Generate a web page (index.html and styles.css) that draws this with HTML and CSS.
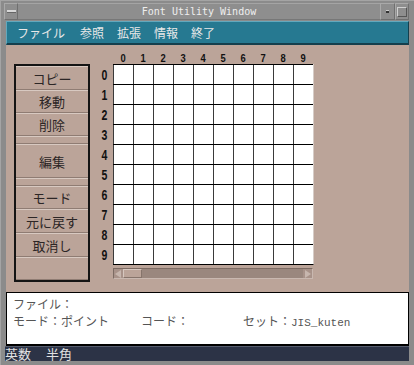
FILE: index.html
```html
<!DOCTYPE html>
<html>
<head>
	<meta charset="utf-8">
	<title>Font Utility Window</title>
	<link rel="stylesheet" href="styles.css">
</head>
<body>
	<div class="window">
		<div class="titlebar">
			<div class="tb-btn tb-menu"><span class="dash"></span></div>
			<div class="title">Font Utility Window</div>
			<div class="tb-btn tb-min"><span class="dot"></span></div>
			<div class="tb-btn tb-max"><span class="box"></span></div>
		</div>
		<ul class="menubar">
			<li>ファイル</li>
			<li>参照</li>
			<li>拡張</li>
			<li>情報</li>
			<li>終了</li>
		</ul>
		<div class="main">
			<div class="tools">
				<div class="btn h24">コピー</div>
				<div class="btn h23">移動</div>
				<div class="btn h23">削除</div>
				<div class="btn sep"></div>
				<div class="btn big">編集</div>
				<div class="btn sep"></div>
				<div class="btn h23">モード</div>
				<div class="btn h24">元に戻す</div>
				<div class="btn h24">取消し</div>
				<div class="btn h23"></div>
			</div>
			<div class="chart">
				<div class="corner"></div>
				<div class="col-labels">
					<span>0</span><span>1</span><span>2</span><span>3</span><span>4</span>
					<span>5</span><span>6</span><span>7</span><span>8</span><span>9</span>
				</div>
				<div class="row-labels">
					<span>0</span><span>1</span><span>2</span><span>3</span><span>4</span>
					<span>5</span><span>6</span><span>7</span><span>8</span><span>9</span>
				</div>
				<div class="grid"></div>
				<div class="scrollbar">
					<div class="arrow left"></div>
					<div class="thumb"></div>
					<div class="track"></div>
					<div class="arrow right"></div>
				</div>
			</div>
		</div>
		<div class="info">
			<div class="line">ファイル：</div>
			<div class="line">
				<span class="f1">モード：ポイント</span>
				<span class="f2">コード：</span>
				<span>セット：<span class="mono">JIS_kuten</span></span>
			</div>
		</div>
		<div class="status">
			<span>英数</span>
			<span>半角</span>
		</div>
	</div>
</body>
</html>
```
FILE: styles.css
```css
*{
	margin: 0;
	padding: 0;
	box-sizing: border-box;
}
body{
	background: #8b8b8b;
	font-family: "Noto Sans CJK JP", "Liberation Sans", sans-serif;
}
ul{
	list-style: none;
}
.window{
	width: 414px;
	height: 365px;
	padding: 2px 5px 0 5px;
	background: #8b8b8b;
	border-left: 1px solid #a4a4a4;
	border-top: 1px solid #a4a4a4;
	display: flex;
	flex-direction: column;
}
/* title bar */
.titlebar{
	height: 17px;
	margin-left: -2px;
	margin-bottom: 1px;
	display: flex;
	background: #8e8e8e;
}
.tb-btn{
	width: 14px;
	display: flex;
	align-items: center;
	justify-content: center;
	border: 1px solid #a9a9a9;
	border-right-color: #6f6f6f;
	border-bottom-color: #6f6f6f;
}
.tb-menu .dash{
	width: 9px;
	height: 3px;
	background: #d8d8d8;
	border-bottom: 1px solid #666;
}
.tb-min{
	width: 15px;
}
.tb-min .dot{
	width: 3px;
	height: 3px;
	background: #333;
	border-top: 1px solid #ccc;
}
.tb-max .box{
	width: 10px;
	height: 10px;
	border: 1px solid #d0d0d0;
	border-right-color: #555;
	border-bottom-color: #555;
}
.title{
	flex: 1;
	text-align: center;
	font-family: "DejaVu Sans Mono", monospace;
	font-size: 10px;
	line-height: 16px;
	color: #eeeeee;
	border-top: 1px solid #a4a4a4;
	border-bottom: 1px solid #777;
}
/* menu */
.menubar{
	height: 24px;
	display: flex;
	align-items: center;
	gap: 13px;
	padding-left: 10px;
	background: #267991;
	border-top: 1px solid #62a8bd;
	border-left: 1px solid #62a8bd;
	border-bottom: 2px solid #143f4d;
	border-right: 1px solid #143f4d;
	color: #e8e8e8;
	font-size: 12px;
	line-height: 14px;
}
.menubar li:first-child{
	margin-right: 2px;
}
/* body */
.main{
	height: 247px;
	display: flex;
	align-items: flex-start;
	padding: 6px 0 0 8px;
	background: #bba499;
}
.tools{
	width: 76px;
	height: 218px;
	margin-top: 13px;
	border: 2px solid #141414;
	display: flex;
	flex-direction: column;
}
.btn{
	display: flex;
	align-items: center;
	justify-content: center;
	font-size: 13px;
	color: #2c2626;
	border-top: 1px solid #d8c9c1;
	border-bottom: 1px solid #8f7c73;
}
.h24{
	height: 24px;
}
.h23{
	height: 23px;
}
.sep{
	height: 8px;
}
.big{
	height: 34px;
}
.chart{
	margin-left: 11px;
	display: grid;
	grid-template-columns: 12px 201px;
	grid-template-rows: 13px 201px auto;
}
.col-labels{
	display: flex;
	align-items: flex-end;
}
.col-labels span{
	width: 20px;
	text-align: center;
	font-family: "Liberation Sans", sans-serif;
	font-weight: bold;
	font-size: 11px;
	line-height: 11px;
	color: #111;
	transform: scaleX(0.85);
}
.row-labels{
	display: flex;
	flex-direction: column;
	padding-top: 1px;
}
.row-labels span{
	height: 20px;
	line-height: 20px;
	width: 8px;
	font-family: "Liberation Sans", sans-serif;
	font-weight: bold;
	font-size: 15px;
	color: #111;
	transform: scaleX(0.7);
	transform-origin: 2px 50%;
}
.grid{
	background-color: #fff;
	background-image:
		linear-gradient(to bottom, #000 1px, transparent 1px),
		linear-gradient(to right, #3a3a3a 1px, transparent 1px);
	background-size: 20px 20px;
	border-bottom: 1px solid #000;
	border-right: 1px solid #d6ccc7;
}
.scrollbar{
	grid-column: 2;
	width: 200px;
	height: 11px;
	margin-top: 3px;
	display: flex;
	background: #9a877e;
	border-top: 1px solid #7c6b63;
	border-left: 1px solid #7c6b63;
	border-bottom: 1px solid #c9b8b0;
	border-right: 1px solid #c9b8b0;
}
.arrow{
	width: 9px;
	position: relative;
	background: #a89289;
}
.arrow:after{
	content: "";
	position: absolute;
	top: 1px;
	width: 0;
	height: 0;
	border-top: 4px solid transparent;
	border-bottom: 4px solid transparent;
}
.arrow.left:after{
	left: 1px;
	border-right: 6px solid #c7b6ae;
}
.arrow.right:after{
	right: 1px;
	border-left: 6px solid #c7b6ae;
}
.thumb{
	width: 19px;
	background: #bba499;
	border-top: 1px solid #d6c7bf;
	border-left: 1px solid #d6c7bf;
	border-bottom: 1px solid #86746b;
	border-right: 1px solid #86746b;
}
.track{
	flex: 1;
}
/* info panel */
.info{
	height: 54px;
	background: #fff;
	border: 1px solid #000;
	border-bottom: 2px solid #000;
	padding: 2px 0 0 6px;
	font-size: 12px;
	color: #555;
}
.line{
	display: flex;
	height: 17px;
	line-height: 17px;
}
.f1{
	width: 128px;
}
.f2{
	width: 102px;
}
.mono{
	font-family: "Liberation Mono", monospace;
	font-size: 11px;
}
/* status bar */
.status{
	height: 15px;
	display: flex;
	gap: 15px;
	padding-left: 0;
	margin-left: -1px;
	background: #2c3346;
	border-top: 1px solid #565d6e;
	color: #e2e2e2;
	font-size: 13px;
	line-height: 14px;
}
```
